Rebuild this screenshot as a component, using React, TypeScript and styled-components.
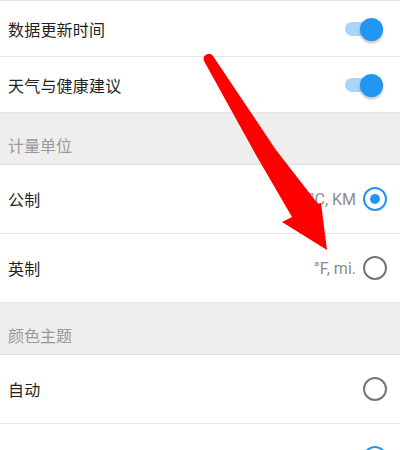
import styled, { createGlobalStyle } from "styled-components";

type ToggleRow = { label: string; on: boolean };
type RadioRow = { label?: string; hint?: string; checked: boolean };

const toggles: ToggleRow[] = [
  { label: "数据更新时间", on: true },
  { label: "天气与健康建议", on: true },
];

const units: RadioRow[] = [
  { label: "公制", hint: "°C, KM", checked: true },
  { label: "英制", hint: "°F, mi.", checked: false },
];

const themes: RadioRow[] = [
  { label: "自动", checked: false },
  { checked: true },
];

const GlobalStyle = createGlobalStyle`
  html, body {
    margin: 0;
    padding: 0;
    background: #ffffff;
  }
  body {
    font-family: Roboto, "Noto Sans CJK SC", sans-serif;
    -webkit-font-smoothing: antialiased;
  }
`;

const App = () => {
  return (
    <>
      <GlobalStyle />
      <Page>
        <List>
          {toggles.map((item) => (
            <SwitchItem key={item.label}>
              <Label>{item.label}</Label>
              <Switch $on={item.on}>
                <Track $on={item.on} />
                <Knob $on={item.on} />
              </Switch>
            </SwitchItem>
          ))}

          <Category>计量单位</Category>
          {units.map((item, i) => (
            <RadioItem key={i}>
              <Label>{item.label}</Label>
              <Right>
                {item.hint && <Hint>{item.hint}</Hint>}
                <Radio $checked={item.checked} />
              </Right>
            </RadioItem>
          ))}

          <Category>颜色主题</Category>
          {themes.map((item, i) => (
            <RadioItem key={i}>
              <Label>{item.label}</Label>
              <Right>
                <Radio $checked={item.checked} />
              </Right>
            </RadioItem>
          ))}
        </List>

        <Pointer viewBox="0 0 400 450" width={400} height={450}>
          <path
            d="M204,61 L256,155 L292,217 L282,222 L327,250 L321,203 L318,204 L276,150 L213,56 A5.2,5.2 0 0 0 204,61 Z"
            fill="#ff0000"
          />
        </Pointer>
      </Page>
    </>
  );
};

const Page = styled.div`
  position: relative;
  width: 400px;
  height: 450px;
  overflow: hidden;
  background: #ffffff;
`;

const List = styled.div`
  display: flex;
  flex-direction: column;
  border-top: 1px solid #e3e3e3;
`;

const Row = styled.div`
  display: flex;
  align-items: center;
  justify-content: space-between;
  box-sizing: border-box;
  padding: 0 13px 0 8px;
  border-bottom: 1px solid #e6e6e6;
  background: #ffffff;
  flex-shrink: 0;
`;

const SwitchItem = styled(Row)`
  height: 56px;
  padding-right: 17px;
`;

const RadioItem = styled(Row)`
  height: 69px;
`;

const Label = styled.span`
  font-size: 16px;
  color: #1f1f1f;
  letter-spacing: 0.2px;
`;

const Category = styled.div`
  box-sizing: border-box;
  height: 52px;
  padding: 24px 8px 0;
  background: #eeeeee;
  border-bottom: 1px solid #dedede;
  font-size: 16px;
  line-height: 20px;
  color: #999999;
  flex-shrink: 0;
`;

const Right = styled.div`
  display: flex;
  align-items: center;
  gap: 7px;
`;

const Hint = styled.span`
  font-size: 16px;
  color: #8c8c8c;
`;

const Radio = styled.span<{ $checked: boolean }>`
  display: flex;
  align-items: center;
  justify-content: center;
  box-sizing: border-box;
  width: 24px;
  height: 24px;
  border-radius: 50%;
  border: 2px solid ${(p) => (p.$checked ? "#2196f3" : "#757575")};

  &::after {
    content: "";
    width: 10px;
    height: 10px;
    border-radius: 50%;
    background: #2196f3;
    display: ${(p) => (p.$checked ? "block" : "none")};
  }
`;

const Switch = styled.span<{ $on: boolean }>`
  position: relative;
  display: flex;
  align-items: center;
  width: 38px;
  height: 24px;
`;

const Track = styled.span<{ $on: boolean }>`
  width: 34px;
  height: 14px;
  border-radius: 7px;
  background: ${(p) => (p.$on ? "#a9d5fa" : "#bdbdbd")};
`;

const Knob = styled.span<{ $on: boolean }>`
  position: absolute;
  top: 1px;
  left: ${(p) => (p.$on ? "15px" : "0")};
  width: 23px;
  height: 23px;
  border-radius: 50%;
  background: ${(p) => (p.$on ? "#2196f3" : "#f5f5f5")};
  box-shadow: 0 2px 3px rgba(0, 0, 0, 0.25);
`;

const Pointer = styled.svg`
  position: absolute;
  top: 0;
  left: 0;
  pointer-events: none;
`;

export default App;
